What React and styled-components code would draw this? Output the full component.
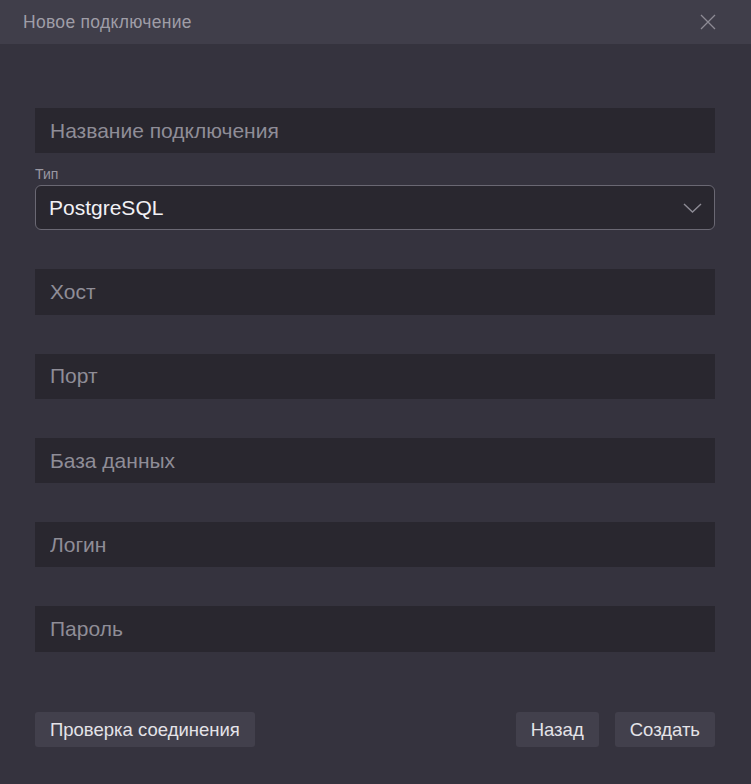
import React, { useState } from "react";
import styled, { createGlobalStyle } from "styled-components";

const GlobalStyle = createGlobalStyle`
  html, body {
    margin: 0;
    padding: 0;
    background: #35333e;
  }
  * {
    box-sizing: border-box;
  }
`;

const fields = ["Хост", "Порт", "База данных", "Логин", "Пароль"];

export default function App() {
  const [type, setType] = useState("PostgreSQL");

  return (
    <>
      <GlobalStyle />
      <Dialog>
        <Header>
          <Title>Новое подключение</Title>
          <CloseButton aria-label="close">
            <svg width="16" height="16" viewBox="0 0 16 16">
              <path d="M1 1L15 15M15 1L1 15" stroke="#8d8b95" strokeWidth="1.3" fill="none" />
            </svg>
          </CloseButton>
        </Header>

        <Body>
          <Field placeholder="Название подключения" />

          <SelectGroup>
            <Label>Тип</Label>
            <SelectBox>
              <SelectValue>{type}</SelectValue>
              <svg width="19" height="10" viewBox="0 0 19 10">
                <path d="M1 1L9.5 9L18 1" stroke="#8d8b95" strokeWidth="1.4" fill="none" />
              </svg>
            </SelectBox>
          </SelectGroup>

          {fields.map((name) => (
            <Field key={name} placeholder={name} $gap />
          ))}
        </Body>

        <Footer>
          <Button onClick={() => setType("PostgreSQL")}>Проверка соединения</Button>
          <Actions>
            <Button>Назад</Button>
            <Button>Создать</Button>
          </Actions>
        </Footer>
      </Dialog>
    </>
  );
}

const Dialog = styled.div`
  width: 751px;
  height: 784px;
  background: #35333e;
  display: flex;
  flex-direction: column;
  font-family: "Liberation Sans", Arial, sans-serif;
`;

const Header = styled.div`
  height: 44px;
  background: #403e4a;
  display: flex;
  align-items: center;
  justify-content: space-between;
  padding: 0 35px 0 23px;
`;

const Title = styled.span`
  font-size: 17.5px;
  letter-spacing: 0.3px;
  color: #9f9da7;
`;

const CloseButton = styled.button`
  background: none;
  border: none;
  padding: 0;
  display: flex;
  cursor: pointer;
`;

const Body = styled.div`
  padding: 64px 36px 0 35px;
  display: flex;
  flex-direction: column;
`;

const Field = styled.input`
  height: 45.3px;
  width: 100%;
  border: none;
  outline: none;
  background: #29272f;
  padding: 0 15px;
  font-family: inherit;
  font-size: 21px;
  color: #f0eff3;
  margin-top: ${(p) => (p.$gap ? "39px" : "0")};

  &::placeholder {
    color: #8f8d97;
  }
`;

const SelectGroup = styled.div`
  margin-top: 13px;
  display: flex;
  flex-direction: column;
`;

const Label = styled.label`
  font-size: 14px;
  color: #9a98a2;
  margin-bottom: 3px;
`;

const SelectBox = styled.div`
  height: 45px;
  background: #29272f;
  border: 1px solid #6a6873;
  border-radius: 6px;
  display: flex;
  align-items: center;
  justify-content: space-between;
  padding: 0 12px 0 13px;
  cursor: pointer;
`;

const SelectValue = styled.span`
  font-size: 21px;
  color: #f2f1f5;
`;

const Footer = styled.div`
  margin-top: auto;
  padding: 0 36px 37px 35px;
  display: flex;
  justify-content: space-between;
  align-items: center;
`;

const Actions = styled.div`
  display: flex;
  gap: 16px;
`;

const Button = styled.button`
  height: 35px;
  padding: 0 15px;
  border: none;
  border-radius: 3px;
  background: #42404c;
  color: #e4e3e8;
  font-family: inherit;
  font-size: 18.5px;
  cursor: pointer;
`;
